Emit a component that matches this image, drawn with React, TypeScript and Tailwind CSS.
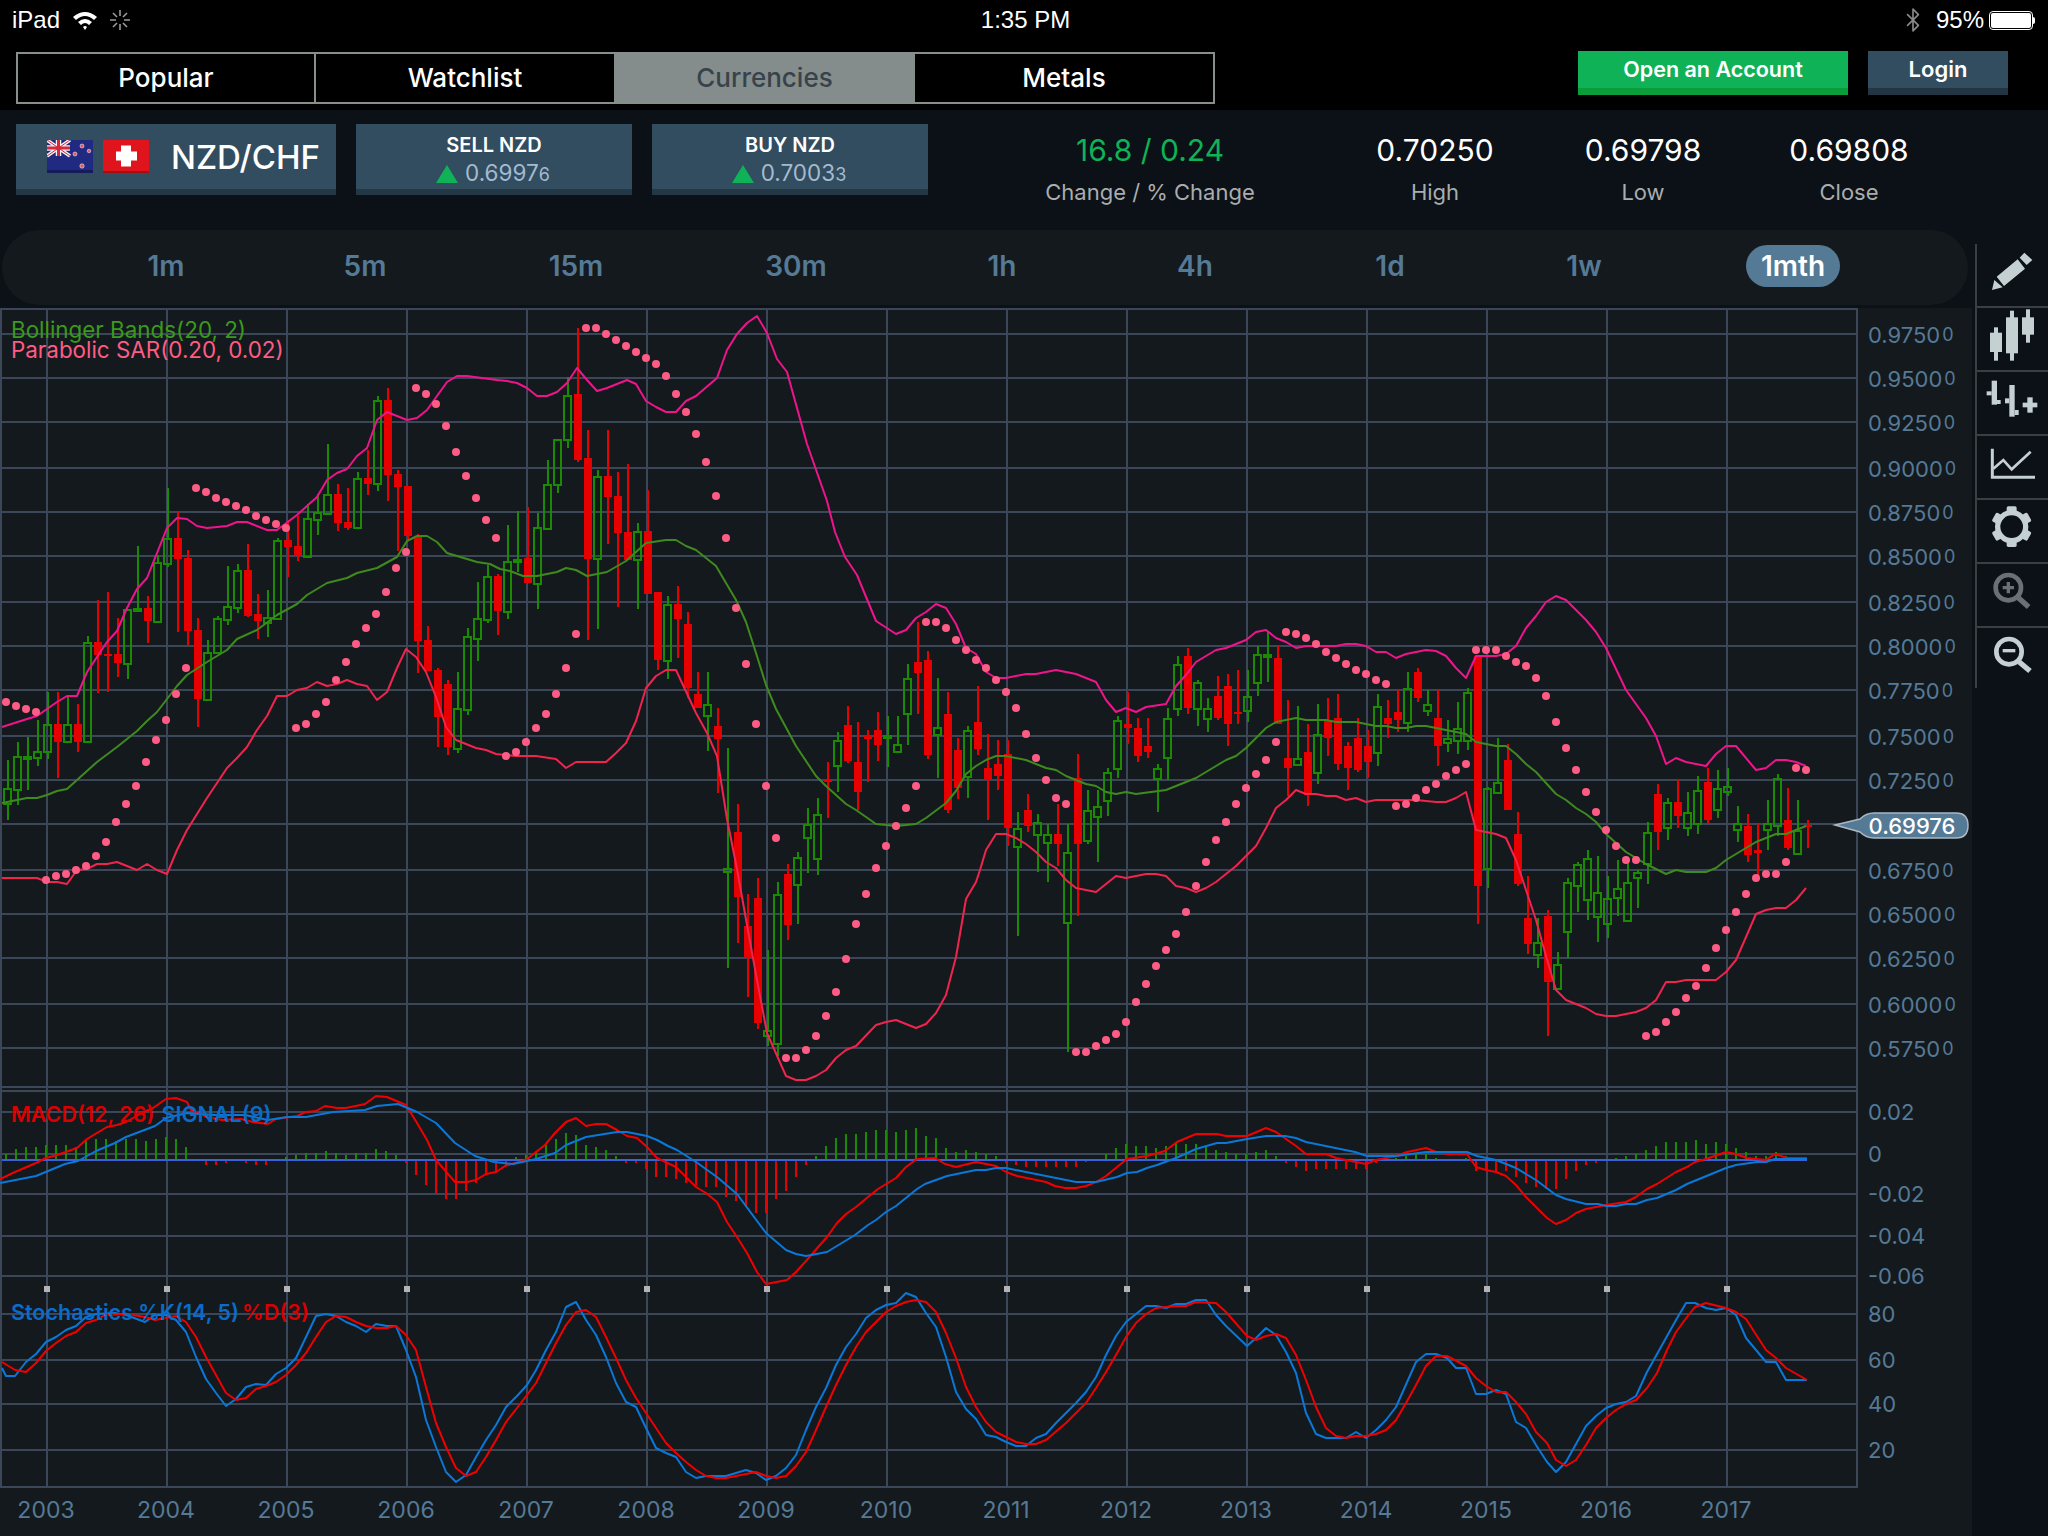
import { Bluetooth } from 'lucide-react';

// [green?, high, bodyTop, bodyBottom, low] in chart pixels, one per month from x=7
const candles: number[][] = [
  [1,760,789,804,820],[1,742,757,790,805],[1,737,757,759,790],[1,720,752,758,766],[1,692,725,752,759],[0,692,724,742,778],[1,695,725,742,743],[0,704,724,742,752],[1,636,643,742,742],[0,600,642,655,693],
  [0,592,654,656,692],[0,618,654,663,677],[1,609,610,664,679],[1,546,609,611,611],[0,596,608,621,643],[1,555,563,622,622],[1,488,539,564,567],[0,512,538,559,632],[0,550,558,631,645],[0,618,630,699,727],
  [1,640,653,700,700],[1,616,619,653,653],[1,566,607,620,625],[1,564,571,608,613],[0,544,570,616,617],[0,594,614,621,639],[1,590,618,623,637],[1,538,541,619,619],[0,520,540,547,577],[0,516,546,555,561],
  [1,504,519,557,557],[1,494,513,520,535],[1,444,495,514,514],[0,484,494,523,531],[0,488,522,528,530],[1,472,479,528,528],[0,450,478,484,495],[1,396,401,484,491],[0,388,400,475,501],[0,470,474,487,551],
  [0,486,486,536,539],[0,534,536,641,673],[0,626,640,671,671],[0,668,670,717,747],[0,680,684,747,755],[1,672,709,749,753],[1,628,637,710,715],[1,582,619,639,661],[1,565,577,620,623],[0,574,576,611,635],
  [1,525,562,612,619],[1,511,560,562,572],[0,507,558,583,583],[1,513,528,584,609],[1,460,485,529,530],[1,440,440,485,493],[1,377,396,440,448],[0,328,394,460,462],[0,430,458,559,640],[1,470,477,559,629],
  [0,430,476,497,544],[0,472,496,533,607],[0,464,532,560,560],[1,523,532,560,609],[0,490,531,594,594],[0,592,592,660,670],[1,596,605,661,679],[0,586,604,619,658],[0,612,624,688,698],[0,672,694,708,708],
  [1,672,705,716,751],[0,708,726,739,793],[1,748,869,872,968],[0,804,832,897,943],[0,894,926,957,997],[0,878,898,1023,1029],[1,950,1031,1036,1046],[1,882,895,1044,1056],[0,864,874,925,940],[1,852,858,885,924],
  [1,808,825,838,873],[1,798,815,859,875],[0,762,779,782,818],[1,732,741,766,792],[0,706,725,761,763],[0,722,762,792,810],[0,730,736,739,782],[0,712,730,745,761],[1,716,736,738,767],[1,716,745,752,752],
  [1,664,679,714,745],[0,622,662,673,714],[0,651,660,755,759],[1,678,728,735,778],[0,692,714,810,813],[0,738,750,788,799],[1,726,731,777,798],[0,686,722,749,755],[0,734,768,780,820],[0,740,764,776,790],
  [0,740,754,828,846],[1,812,829,847,936],[0,794,810,826,832],[1,814,823,835,872],[1,824,835,843,882],[0,804,834,844,866],[1,824,853,923,1052],[0,754,778,844,916],[1,790,811,841,844],[1,790,807,817,862],
  [1,768,773,801,816],[1,716,721,769,778],[0,692,724,728,744],[0,718,728,756,762],[0,718,746,752,758],[1,764,769,779,812],[1,708,719,758,780],[1,656,665,709,716],[0,648,656,708,714],[1,680,683,709,726],
  [1,698,709,719,732],[0,676,696,718,720],[0,674,686,724,746],[0,670,712,714,724],[1,670,697,711,722],[1,646,655,683,696],[1,632,655,657,682],[0,646,658,724,724],[0,700,758,768,796],[1,706,759,765,765],
  [0,724,752,795,806],[1,704,735,773,784],[0,698,720,738,756],[0,694,718,764,770],[0,742,746,768,790],[0,718,738,770,772],[0,730,746,762,778],[1,694,707,753,766],[0,700,718,724,738],[0,690,712,720,732],
  [1,672,689,723,732],[0,668,672,698,702],[1,690,705,711,716],[0,690,718,746,766],[1,720,739,743,752],[1,702,729,741,754],[1,688,693,741,750],[0,656,656,886,924],[1,787,789,869,888],[1,738,783,793,793],
  [0,744,760,810,810],[0,812,834,884,886],[0,876,918,944,954],[1,918,943,955,968],[0,910,916,982,1036],[1,952,965,989,989],[1,878,883,932,958],[1,862,865,886,912],[1,850,859,900,920],[1,856,893,917,942],
  [1,876,899,924,938],[1,860,889,898,916],[1,862,883,921,922],[1,870,873,878,908],[1,822,833,864,884],[0,784,794,832,850],[1,798,803,828,840],[0,780,802,816,828],[1,792,813,828,836],[1,776,791,824,834],
  [0,768,782,820,824],[1,770,789,810,818],[1,768,787,792,796],[1,806,824,830,842],[0,814,826,855,862],[0,824,850,853,878],[1,800,824,830,850],[1,774,779,826,836],[0,788,820,848,850],[1,800,831,854,854],
  [0,820,825,827,848],
];

const upperBand = '2,727 27,719 37,716 57,702 67,696 77,696 87,672 107,642 117,631 127,608 137,589 147,578 167,528 177,518 187,519 197,526 207,528 227,526 237,522 247,522 267,530 277,530 297,515 317,497 327,480 337,473 347,469 357,456 367,448 377,420 387,412 407,420 417,418 427,410 447,382 457,376 467,376 497,380 507,381 517,383 527,388 537,396 547,396 557,392 567,383 577,368 587,380 597,391 607,388 627,380 636,384 646,401 656,407 666,412 676,412 686,401 696,396 717,378 727,350 737,334 747,323 757,316 767,333 777,359 787,372 807,444 827,501 835,532 845,557 857,575 876,621 896,634 906,630 916,618 926,612 936,604 946,608 956,624 966,648 976,654 986,672 996,678 1006,678 1026,674 1036,674 1056,670 1076,674 1096,682 1106,700 1116,712 1126,708 1136,712 1146,707 1166,704 1176,686 1186,675 1196,662 1216,650 1226,648 1246,640 1256,632 1266,630 1276,638 1286,642 1296,648 1306,646 1336,646 1346,644 1356,644 1366,646 1376,652 1386,652 1396,658 1406,654 1426,650 1436,651 1446,656 1456,668 1466,678 1476,656 1496,656 1506,654 1516,646 1526,628 1536,616 1546,602 1556,596 1566,600 1586,620 1596,632 1606,648 1626,690 1636,704 1646,718 1656,736 1666,764 1676,758 1686,762 1706,766 1716,754 1726,746 1736,746 1756,770 1766,768 1776,760 1786,760 1796,762 1806,766';
const midBand = '2,803 27,798 37,798 47,795 57,791 67,789 77,780 97,762 117,747 137,731 147,721 157,712 177,686 187,675 207,662 227,650 237,639 257,630 277,615 297,604 307,595 327,583 347,578 357,573 377,568 397,557 407,541 417,536 427,536 437,542 447,553 457,556 477,562 490,564 500,569 510,571 523,576 537,576 557,572 566,568 576,570 587,576 607,572 626,561 646,543 666,540 676,540 686,546 696,550 716,566 736,600 746,622 756,653 766,685 776,709 796,746 816,776 826,786 846,804 856,810 876,824 896,826 916,824 926,818 946,803 956,791 966,774 976,766 986,760 996,756 1006,756 1026,760 1046,768 1056,770 1066,776 1086,784 1096,786 1106,792 1116,794 1126,792 1136,794 1166,790 1196,778 1216,766 1226,760 1236,756 1246,748 1266,728 1276,722 1296,718 1306,720 1326,720 1336,722 1356,722 1376,726 1386,726 1396,728 1406,728 1416,726 1426,726 1446,730 1466,734 1476,742 1496,746 1506,746 1516,754 1526,764 1536,772 1556,794 1566,800 1576,808 1586,814 1596,822 1606,834 1626,852 1646,864 1666,874 1676,870 1686,872 1706,872 1716,868 1726,860 1756,842 1776,834 1786,834 1806,826';
const lowerBand = '2,878 37,878 47,882 57,882 67,884 77,870 87,869 97,864 107,864 117,862 137,870 147,864 157,870 167,874 177,850 187,830 207,798 227,768 237,758 247,747 257,730 267,716 277,696 287,696 297,690 307,688 317,682 327,686 337,684 347,680 357,684 367,686 377,700 387,692 397,668 406,649 416,657 426,672 436,697 446,727 456,740 476,748 486,750 496,754 516,756 536,756 556,759 566,768 576,762 606,762 616,753 626,743 636,721 646,688 656,676 666,670 676,670 696,713 707,733 717,756 727,819 737,869 747,925 757,980 767,1033 786,1076 796,1080 806,1080 816,1076 826,1070 836,1058 846,1050 856,1046 876,1025 886,1022 896,1020 916,1028 926,1024 936,1013 946,995 956,957 966,899 976,882 980,870 986,850 996,834 1006,834 1016,838 1026,844 1036,852 1046,862 1056,868 1066,880 1076,888 1096,892 1116,876 1126,878 1146,874 1156,874 1166,876 1176,886 1186,888 1196,892 1206,888 1216,882 1236,866 1256,846 1266,828 1276,808 1286,800 1296,790 1306,794 1316,794 1326,796 1336,796 1346,800 1356,798 1366,802 1376,800 1416,800 1436,802 1446,802 1456,798 1466,792 1476,830 1496,834 1506,838 1516,860 1526,890 1536,920 1546,956 1556,990 1566,1000 1586,1008 1596,1014 1606,1016 1616,1016 1636,1012 1646,1008 1656,1000 1666,982 1676,982 1686,980 1716,980 1726,972 1736,960 1756,914 1766,910 1776,908 1786,908 1796,900 1806,888';

const sar = [
  [6,702],[16,706],[26,709],[36,712],[46,880],[56,876],[66,874],[76,870],[86,866],[96,856],[106,842],[116,822],[126,804],[136,786],[146,762],[156,740],[166,720],[176,694],[186,668],
  [196,488],[206,492],[216,498],[226,502],[236,506],[246,510],[256,516],[266,520],[276,524],[286,528],[296,728],[306,724],[316,714],[326,702],[336,680],[346,662],[356,644],[366,628],[376,614],[386,592],[396,568],[406,552],
  [416,388],[426,394],[436,404],[446,426],[456,452],[466,476],[476,498],[486,520],[496,538],[506,756],[516,752],[526,742],[536,728],[546,714],[556,694],[566,668],[576,634],
  [586,328],[596,328],[606,334],[616,340],[626,346],[636,352],[646,358],[656,364],[666,376],[676,394],[686,412],[696,434],[706,462],[716,496],[726,538],[736,608],[746,664],[756,724],[766,786],[776,838],
  [786,1058],[796,1058],[806,1050],[816,1036],[826,1016],[836,992],[846,959],[856,924],[866,894],[876,868],[886,846],[896,826],[906,808],[916,786],
  [926,622],[936,622],[946,628],[956,640],[966,650],[976,660],[986,668],[996,680],[1006,692],[1016,708],[1026,734],[1036,758],[1046,780],[1056,798],[1066,804],
  [1076,1052],[1086,1052],[1096,1046],[1106,1040],[1116,1034],[1126,1022],[1136,1002],[1146,984],[1156,966],[1166,950],[1176,934],[1186,912],[1196,886],[1206,862],[1216,840],[1226,822],[1236,804],[1246,788],[1256,774],[1266,760],[1276,742],
  [1286,632],[1296,634],[1306,638],[1316,644],[1326,652],[1336,658],[1346,664],[1356,670],[1366,674],[1376,680],[1386,684],[1396,806],[1406,804],[1416,798],[1426,790],[1436,784],[1446,776],[1456,770],[1466,764],
  [1476,650],[1486,650],[1496,650],[1506,656],[1516,662],[1526,666],[1536,678],[1546,696],[1556,722],[1566,748],[1576,770],[1586,792],[1596,812],[1606,830],[1616,846],[1626,860],[1636,860],
  [1646,1036],[1656,1032],[1666,1022],[1676,1012],[1686,998],[1696,986],[1706,968],[1716,948],[1726,930],[1736,912],[1746,894],[1756,878],[1766,874],[1776,874],[1786,862],[1796,768],[1806,770],
];

// signed bar height above the MACD zero line, one per month from x=6
const histogram = [6,11,13,13,15,15,15,13,19,21,21,19,21,21,19,21,23,21,13,0,-5,-5,-3,0,-3,-5,-5,0,3,5,7,7,9,7,5,7,7,11,9,5,-3,-15,-25,-33,-39,-39,-31,-23,-15,-11,-5,3,5,9,15,21,27,25,15,13,10,4,-3,-3,-9,-17,-17,-19,-23,-25,-27,-27,-37,-41,-47,-53,-53,-39,-31,-17,-5,4,14,22,26,26,28,30,30,28,30,32,24,22,12,8,10,8,6,4,-3,-5,-7,-7,-7,-7,-7,-7,-2,0,6,12,16,14,14,12,14,18,16,16,14,10,8,6,6,8,10,4,-3,-7,-11,-9,-9,-9,-9,-9,-9,-3,0,2,4,6,6,2,0,0,2,-11,-11,-11,-11,-17,-23,-27,-29,-29,-19,-11,-5,-3,0,2,4,6,10,14,18,18,18,20,16,18,16,12,8,4,4,8,4,2,2];

const macdLine = '0,1179 15,1172 36,1163 46,1158 57,1155 77,1148 87,1139 107,1127 117,1125 126,1122 142,1113 153,1108 166,1099 176,1098 187,1102 191,1110 207,1117 222,1120 241,1119 253,1122 268,1124 276,1119 297,1116 306,1112 316,1111 325,1106 337,1108 346,1108 365,1104 376,1096 387,1097 406,1105 417,1123 427,1140 436,1160 455,1182 467,1182 476,1180 486,1174 496,1172 505,1166 515,1163 526,1160 536,1152 545,1145 555,1133 566,1122 576,1118 586,1126 596,1124 606,1124 617,1130 627,1136 637,1138 647,1147 657,1158 676,1167 696,1187 706,1193 717,1202 727,1222 737,1237 747,1253 757,1272 766,1284 787,1280 796,1272 806,1261 827,1237 837,1223 846,1214 856,1207 868,1197 878,1189 896,1178 906,1167 917,1159 935,1158 945,1164 956,1167 976,1162 996,1166 1006,1172 1017,1176 1046,1182 1055,1186 1065,1188 1076,1188 1086,1186 1096,1182 1106,1176 1117,1167 1127,1159 1147,1156 1165,1151 1177,1142 1196,1134 1217,1134 1226,1136 1247,1136 1266,1128 1276,1132 1296,1146 1306,1154 1326,1154 1336,1158 1366,1164 1376,1160 1396,1156 1407,1152 1426,1148 1436,1152 1447,1154 1467,1154 1476,1167 1486,1170 1496,1172 1506,1176 1516,1185 1526,1197 1547,1218 1556,1224 1566,1220 1576,1213 1586,1209 1606,1205 1626,1202 1636,1197 1647,1189 1657,1184 1676,1172 1687,1167 1695,1162 1706,1159 1726,1152 1736,1154 1747,1158 1766,1160 1775,1154 1787,1158 1807,1158';
const signalLine = '0,1183 36,1176 65,1164 78,1161 96,1151 115,1143 126,1137 155,1126 166,1118 187,1113 214,1115 245,1115 268,1120 287,1117 306,1117 333,1112 365,1110 377,1106 398,1104 417,1112 436,1123 455,1143 475,1156 494,1162 513,1164 536,1159 555,1153 566,1145 586,1137 617,1132 627,1132 647,1136 657,1140 668,1146 677,1150 696,1162 717,1177 737,1194 766,1233 786,1250 796,1254 806,1256 827,1252 855,1235 868,1225 876,1220 886,1212 896,1206 917,1189 925,1184 947,1176 976,1170 986,1170 996,1168 1006,1168 1076,1182 1096,1182 1117,1177 1127,1173 1137,1172 1147,1168 1157,1165 1176,1158 1196,1149 1217,1143 1226,1143 1247,1139 1266,1136 1285,1136 1296,1138 1306,1142 1355,1152 1367,1156 1396,1156 1426,1152 1467,1152 1477,1156 1496,1160 1516,1168 1536,1180 1556,1195 1566,1199 1586,1204 1598,1204 1606,1206 1616,1206 1626,1204 1636,1204 1647,1200 1657,1198 1676,1190 1687,1184 1726,1168 1736,1165 1757,1162 1766,1162 1775,1159 1807,1159';
const stochK = '2,1368 6,1376 15,1376 26,1362 36,1354 46,1342 56,1337 66,1330 76,1326 86,1317 96,1314 115,1313 126,1315 145,1322 155,1315 166,1315 176,1320 186,1332 196,1357 206,1379 216,1393 226,1406 236,1399 246,1387 256,1384 266,1385 276,1374 286,1368 296,1358 306,1337 316,1316 326,1314 336,1316 346,1322 356,1326 366,1332 376,1324 387,1326 396,1326 406,1350 416,1377 426,1420 436,1447 446,1472 456,1482 466,1475 476,1457 486,1440 496,1425 506,1407 517,1396 527,1385 536,1370 546,1350 556,1332 566,1307 576,1302 586,1320 596,1335 606,1357 616,1383 626,1402 636,1407 646,1428 656,1448 666,1453 676,1457 686,1472 696,1478 706,1476 726,1476 746,1470 756,1473 766,1480 776,1476 786,1468 796,1455 806,1430 816,1407 826,1388 836,1365 846,1347 856,1334 866,1318 876,1310 886,1305 896,1303 906,1293 916,1297 926,1313 936,1327 946,1357 956,1392 966,1409 976,1419 986,1435 996,1437 1006,1442 1016,1446 1026,1446 1036,1438 1046,1434 1056,1423 1076,1403 1086,1392 1096,1377 1106,1355 1116,1336 1126,1322 1146,1306 1156,1306 1166,1308 1176,1304 1186,1304 1196,1300 1206,1300 1216,1315 1226,1326 1247,1346 1256,1338 1266,1328 1276,1335 1286,1352 1296,1373 1306,1413 1316,1434 1326,1438 1346,1438 1356,1432 1366,1438 1376,1430 1386,1420 1396,1407 1416,1362 1426,1354 1436,1354 1447,1358 1456,1368 1466,1368 1476,1394 1486,1394 1496,1390 1506,1394 1516,1422 1526,1428 1536,1445 1547,1462 1556,1472 1566,1462 1586,1426 1596,1416 1606,1408 1616,1404 1626,1402 1636,1396 1647,1372 1676,1320 1686,1303 1695,1303 1706,1308 1716,1310 1726,1308 1736,1315 1746,1338 1766,1362 1776,1362 1786,1380 1807,1380';
const stochD = '2,1362 15,1370 26,1372 36,1363 46,1351 56,1343 66,1336 76,1332 86,1323 96,1320 105,1315 126,1314 145,1317 155,1320 176,1316 186,1322 196,1337 206,1357 216,1375 226,1393 236,1400 246,1398 256,1389 266,1386 276,1382 286,1375 296,1365 306,1353 316,1337 326,1322 336,1316 346,1317 356,1322 366,1326 376,1328 387,1328 396,1326 406,1335 416,1350 426,1387 436,1423 446,1447 456,1468 466,1476 476,1472 486,1457 496,1440 506,1422 517,1408 527,1395 536,1383 546,1363 556,1343 566,1325 576,1312 586,1310 596,1317 606,1337 616,1358 626,1380 636,1398 646,1413 656,1428 666,1443 676,1453 686,1462 696,1470 706,1476 716,1478 726,1478 746,1474 756,1472 766,1476 776,1478 786,1476 796,1466 806,1452 816,1430 826,1407 836,1385 846,1365 856,1347 866,1332 876,1322 886,1312 896,1306 906,1302 916,1300 926,1302 936,1312 946,1333 956,1358 966,1387 976,1407 986,1422 996,1432 1006,1437 1016,1442 1026,1444 1036,1444 1046,1440 1066,1423 1086,1403 1096,1388 1106,1372 1116,1355 1126,1337 1136,1323 1146,1314 1156,1308 1176,1306 1186,1306 1196,1302 1216,1303 1226,1312 1247,1336 1256,1340 1266,1336 1276,1334 1286,1338 1296,1355 1306,1380 1316,1407 1326,1428 1336,1436 1346,1438 1356,1436 1366,1436 1376,1434 1386,1430 1396,1420 1406,1403 1416,1385 1426,1366 1436,1356 1447,1356 1466,1366 1476,1378 1486,1386 1496,1392 1506,1392 1516,1402 1526,1414 1536,1432 1547,1443 1556,1460 1566,1466 1576,1460 1586,1445 1596,1428 1606,1418 1616,1410 1626,1404 1636,1400 1647,1388 1657,1373 1667,1350 1676,1332 1687,1317 1695,1307 1706,1303 1726,1308 1736,1312 1746,1319 1766,1350 1776,1358 1786,1368 1807,1380';

const gridX = Array.from({ length: 15 }, (_, i) => 47 + i * 120);
const gridY = [334,378,422,468,512,556,602,646,690,736,780,824,870,914,958,1004,1048,1087,1091,1112,1154,1194,1236,1276,1314,1360,1404,1450];
const priceLabels = [[334,'0.9750'],[378,'0.9500'],[422,'0.9250'],[468,'0.9000'],[512,'0.8750'],[556,'0.8500'],[602,'0.8250'],[646,'0.8000'],[690,'0.7750'],[736,'0.7500'],[780,'0.7250'],[870,'0.6750'],[914,'0.6500'],[958,'0.6250'],[1004,'0.6000'],[1048,'0.5750']] as [number, string][];
const sideLabels = [[1112,'0.02'],[1154,'0'],[1194,'-0.02'],[1236,'-0.04'],[1276,'-0.06'],[1314,'80'],[1360,'60'],[1404,'40'],[1450,'20']] as [number, string][];

const tabs = [
  { label: 'Popular', width: 'w-[298px] border-r-2 border-[#868e8e] text-white' },
  { label: 'Watchlist', width: 'w-[298px] text-white' },
  { label: 'Currencies', width: 'w-[301px] bg-[#848c8c] text-[#36434a]' },
  { label: 'Metals', width: 'w-[298px] text-white' },
];
const timeframes = [
  { label: '1m', width: 'w-[198px]' },
  { label: '5m', width: 'w-[200px]' },
  { label: '15m', width: 'w-[222px]' },
  { label: '30m', width: 'w-[218px]' },
  { label: '1h', width: 'ml-[4px] w-[186px]' },
  { label: '4h', width: 'w-[200px]' },
  { label: '1d', width: 'w-[190px]' },
  { label: '1w', width: 'w-[198px]' },
];

function Candle({ c, i }: { c: number[]; i: number }) {
  const [green, hi, top, bot, lo] = c;
  const x = 7 + i * 10;
  if (green) {
    return (
      <g>
        <line x1={x + 1} x2={x + 1} y1={hi} y2={top} stroke="#1a8a00" strokeWidth="2" />
        <line x1={x + 1} x2={x + 1} y1={bot} y2={lo} stroke="#1a8a00" strokeWidth="2" />
        <rect x={x - 3} y={top} width="7" height={bot - top} fill="none" stroke="#1a8a00" strokeWidth="2" />
      </g>
    );
  }
  return (
    <g>
      <line x1={x + 1} x2={x + 1} y1={hi} y2={lo} stroke="#e60000" strokeWidth="2" />
      <rect x={x - 3} y={top} width="8" height={bot - top} fill="#e60000" />
    </g>
  );
}

function Chart() {
  return (
    <svg width="1972" height="1228" viewBox="0 308 1972 1228" className="block bg-[#14191e]" fontFamily="Inter, sans-serif">
      <g stroke="#3b4759" strokeWidth="2">
        <line x1="0" x2="1858" y1="309" y2="309" />
        <line x1="1" x2="1" y1="309" y2="1487" />
        <line x1="1857" x2="1857" y1="309" y2="1487" />
        <line x1="0" x2="1858" y1="1487" y2="1487" />
        {gridY.map(y => <line key={y} x1="0" x2="1857" y1={y} y2={y} />)}
        {gridX.map(x => <line key={x} x1={x} x2={x} y1="309" y2="1487" />)}
      </g>

      {candles.map((c, i) => <Candle key={i} c={c} i={i} />)}
      <g fill="none" strokeWidth="2" strokeLinejoin="round">
        <polyline points={upperBand} stroke="#f0148c" />
        <polyline points={midBand} stroke="#3f8a1e" />
        <polyline points={lowerBand} stroke="#f0244c" />
      </g>
      {sar.map(([x, y]) => <circle key={x} cx={x} cy={y} r="4" fill="#ff5c85" />)}

      {histogram.map((h, i) => h !== 0 && (
        <rect key={i} x={5 + i * 10} y={h > 0 ? 1160 - h : 1160} width="2" height={Math.abs(h)} fill={h > 0 ? '#1a8a00' : '#e60000'} />
      ))}
      <line x1="2" x2="1807" y1="1160" y2="1160" stroke="#3a62d8" strokeWidth="2" />
      <g fill="none" strokeWidth="2" strokeLinejoin="round">
        <polyline points={macdLine} stroke="#f00000" />
        <polyline points={signalLine} stroke="#0a78d8" />
        <polyline points={stochK} stroke="#0a78d8" />
        <polyline points={stochD} stroke="#f00000" />
      </g>
      {gridX.map(x => <rect key={x} x={x - 3} y="1286" width="6" height="6" fill="#b4b4b4" />)}

      <text x="11" y="338" fontSize="22.4" fill="#3a9a1a">Bollinger Bands(20, 2)</text>
      <text x="11" y="358" fontSize="22.4" fill="#ff5c85">Parabolic SAR(0.20, 0.02)</text>
      <text x="11" y="1122" fontSize="21.5" fontWeight="600">
        <tspan fill="#d80000">MACD(12, 26)</tspan>
        <tspan fill="#0a6cc8" dx="7">SIGNAL(9)</tspan>
      </text>
      <text x="11" y="1320" fontSize="21.5" fontWeight="600">
        <tspan fill="#0a6cc8">Stochastics %K(14, 5)</tspan>
        <tspan fill="#d80000" dx="3">%D(3)</tspan>
      </text>

      <g fill="#557a96" fontSize="22">
        {priceLabels.map(([y, t]) => (
          <text key={y} x="1868" y={y + 9}>{t}<tspan fontSize="18" dx="2" dy="-2">0</tspan></text>
        ))}
        {sideLabels.map(([y, t]) => <text key={y} x="1868" y={y + 8}>{t}</text>)}
        {gridX.map((x, i) => <text key={x} x={x - 1} y="1518" textAnchor="middle" fontSize="23">{2003 + i}</text>)}
      </g>

      <path d="M1835 825 L1860 819 Q1866 813 1874 813 L1956 813 Q1968 813 1968 825.5 Q1968 838 1956 838 L1874 838 Q1866 838 1860 832 Z" fill="#557a96" stroke="#aab8c2" strokeWidth="1.5" />
      <text x="1912" y="834" textAnchor="middle" fontSize="22" fontWeight="500" fill="#ffffff">0.69976</text>
    </svg>
  );
}

function SideIcon({ y, children }: { y: number; children: React.ReactNode }) {
  return (
    <div className="flex h-[64px] items-center border-b-2 border-[#3a3f42] last:h-[60px] last:border-b-0">
      <svg width="71" height="62" viewBox={`411 ${y} 213 186`}>{children}</svg>
    </div>
  );
}

function Sidebar() {
  const ic = '#c5d0d3';
  return (
    <div className="w-[73px] pt-[14px]">
      <div className="border-l-2 border-[#3a3f42]">
        <SideIcon y={42}>
          <path d="M470 140 L533 88 L555 116 L492 168 Z M456 180 L463 150 L488 172 Z M539 83 L553 68 L577 90 L560 105 Z" fill={ic} />
        </SideIcon>
        <SideIcon y={234}>
          <g fill={ic}>
            <rect x="450" y="308" width="36" height="58" /><rect x="462" y="292" width="12" height="100" />
            <rect x="498" y="262" width="36" height="108" /><rect x="510" y="242" width="12" height="150" />
            <rect x="546" y="262" width="36" height="52" /><rect x="558" y="238" width="12" height="100" />
          </g>
        </SideIcon>
        <SideIcon y={426}>
          <g fill={ic}>
            <rect x="455" y="452" width="16" height="72" /><rect x="440" y="484" width="15" height="12" /><rect x="471" y="510" width="11" height="12" />
            <rect x="508" y="465" width="16" height="95" /><rect x="495" y="505" width="13" height="15" /><rect x="524" y="540" width="12" height="15" />
            <rect x="562" y="502" width="16" height="46" /><rect x="548" y="518" width="44" height="14" />
          </g>
        </SideIcon>
        <SideIcon y={618}>
          <path d="M457 656 V742 H585" fill="none" stroke={ic} strokeWidth="9" />
          <polyline points="460,716 490,690 515,718 572,665" fill="none" stroke={ic} strokeWidth="8" />
        </SideIcon>
        <SideIcon y={810}>
          <circle cx="515" cy="890" r="42" fill="none" stroke={ic} strokeWidth="16" />
          {[0, 60, 120, 180, 240, 300].map(a => (
            <rect key={a} x="500" y="829" width="30" height="20" rx="5" fill={ic} transform={`rotate(${a} 515 890)`} />
          ))}
        </SideIcon>
        <SideIcon y={1002}>
          <circle cx="505" cy="1073" r="38" fill="none" stroke="#6a7073" strokeWidth="14" />
          <path d="M535 1103 L566 1131" stroke="#6a7073" strokeWidth="16" />
          <path d="M505 1056 V1090 M488 1073 H522" stroke="#6a7073" strokeWidth="10" />
        </SideIcon>
        <SideIcon y={1194}>
          <circle cx="507" cy="1268" r="38" fill="none" stroke={ic} strokeWidth="14" />
          <path d="M537 1298 L570 1326" stroke={ic} strokeWidth="16" />
          <path d="M488 1265 H526" stroke={ic} strokeWidth="10" />
        </SideIcon>
      </div>
    </div>
  );
}

function NzFlag() {
  return (
    <svg width="46" height="33" viewBox="0 0 46 33" className="block">
      <rect width="46" height="33" rx="1" fill="#1f2a80" />
      <rect y="30" width="46" height="3" fill="#141c5c" />
      <path d="M0 0 L23 16 M23 0 L0 16" stroke="#f2f2f2" strokeWidth="3.5" />
      <path d="M11.5 0 V16 M0 8 H23" stroke="#f2f2f2" strokeWidth="5.5" />
      <path d="M11.5 0 V16 M0 8 H23" stroke="#d8263c" strokeWidth="3" />
      <path d="M0 0 L23 16 M23 0 L0 16" stroke="#d8263c" strokeWidth="1" />
      <g fill="#e05a6a" stroke="#ffffff" strokeWidth="0.5">
        <circle cx="35" cy="6" r="2" /><circle cx="28" cy="14" r="2" /><circle cx="42" cy="11" r="1.8" /><circle cx="35" cy="26" r="2.2" />
      </g>
    </svg>
  );
}

function ChFlag() {
  return (
    <svg width="46" height="33" viewBox="0 0 46 33" className="block">
      <rect width="46" height="33" rx="1" fill="#e0141c" />
      <rect y="31" width="46" height="2" fill="#a50f14" />
      <path d="M18 6 H28 V12 H34 V21 H28 V27 H18 V21 H13 V12 H18 Z" fill="#ffffff" transform="translate(0 -0.5)" />
    </svg>
  );
}

function QuoteButton({ title, price, last }: { title: string; price: string; last: string }) {
  return (
    <div className="flex h-[71px] w-[276px] flex-col items-center border-b-[6px] border-[#243744] bg-[#324c60] pt-[8px]">
      <div className="text-[20px] leading-[26px] font-semibold text-white">{title}</div>
      <div className="mt-[1px] flex items-center gap-[7px] text-[22.5px] leading-[28px] text-[#a3bbce]">
        <svg width="22" height="18" viewBox="0 0 22 18" className="-ml-[2px] block"><path d="M11 0 L22 18 H0 Z" fill="#10b257" /></svg>
        <span>{price}<span className="text-[18px]">{last}</span></span>
      </div>
    </div>
  );
}

function Stat({ value, label, box, green }: { value: string; label: string; box: string; green?: boolean }) {
  return (
    <div className={`text-center ${box}`}>
      <div className={`text-[30px] leading-[40px] ${green ? 'text-[#10b257]' : 'text-white'}`}>{value}</div>
      <div className="mt-[8px] whitespace-nowrap text-[22px] leading-[28px] text-[#a9adaf]">{label}</div>
    </div>
  );
}

function StatusBar() {
  return (
    <div className="grid h-[40px] grid-cols-3 items-center px-[12px] text-[24px] text-white" style={{ fontFamily: '"Liberation Sans", sans-serif' }}>
      <div className="flex items-center">
        <span>iPad</span>
        <svg width="26" height="20" viewBox="0 0 26 20" className="ml-[12px]">
          <path d="M1 7 Q13 -3 25 7 L22 10 Q13 2 4 10 Z M6 12 Q13 6 20 12 L17 15 Q13 11 9 15 Z M11 17 Q13 15 15 17 L13 20 Z" fill="#ffffff" />
        </svg>
        <svg width="22" height="22" viewBox="0 0 22 22" className="ml-[11px]" stroke="#9a9a9a" strokeWidth="1.6">
          <path d="M11 1 V7 M11 15 V21 M1 11 H7 M15 11 H21 M4 4 L8 8 M14 14 L18 18 M18 4 L14 8 M8 14 L4 18" />
        </svg>
      </div>
      <div className="pl-[3px] text-center">1:35 PM</div>
      <div className="flex items-center justify-end pr-[1px]">
        <Bluetooth size={26} strokeWidth={1.5} className="text-[#8a8a8a]" />
        <span className="ml-[10px]">95%</span>
        <div className="ml-[5px] flex items-center">
          <div className="h-[19px] w-[44px] rounded-[4px] border border-white p-[1px]"><div className="h-full w-full rounded-[2px] bg-white" /></div>
          <div className="h-[7px] w-[2px] rounded-r-[2px] bg-white" />
        </div>
      </div>
    </div>
  );
}

export default function App() {
  return (
    <div className="h-[1536px] w-[2048px] overflow-hidden bg-[#0b1116]" style={{ fontFamily: 'Inter, sans-serif' }}>
      <div className="h-[110px] bg-black">
        <StatusBar />
        <div className="flex items-start pl-[16px] pt-[11px]">
          <div className="mt-[1px] flex h-[52px] w-[1199px] border-2 border-[#868e8e]">
            {tabs.map(t => (
              <div key={t.label} className={`flex items-center justify-center pb-[2px] text-[26px] font-medium ${t.width}`}>
                {t.label}
              </div>
            ))}
          </div>
          <div className="ml-[363px] h-[44px] w-[270px] border-b-[7px] border-[#0a9e3a] bg-[#10b257] text-center text-[21.5px] leading-[36px] font-semibold text-white">Open an Account</div>
          <div className="ml-[20px] h-[44px] w-[140px] border-b-[7px] border-[#233442] bg-[#324c60] text-center text-[22px] leading-[36px] font-semibold text-white">Login</div>
        </div>
      </div>

      <div className="flex h-[120px] items-start pl-[16px]">
        <div className="mt-[14px] flex h-[71px] w-[320px] items-center border-b-[6px] border-[#243744] bg-[#324c60] pl-[31px]">
          <NzFlag />
          <div className="ml-[10px]"><ChFlag /></div>
          <span className="ml-[22px] pt-[2px] text-[33px] font-medium text-white">NZD/CHF</span>
        </div>
        <div className="mt-[14px] ml-[20px]"><QuoteButton title="SELL NZD" price="0.6997" last="6" /></div>
        <div className="mt-[14px] ml-[20px]"><QuoteButton title="BUY NZD" price="0.7003" last="3" /></div>
        <div className="flex pt-[20px]">
          <Stat value="16.8 / 0.24" label="Change / % Change" box="ml-[102px] w-[240px]" green />
          <Stat value="0.70250" label="High" box="ml-[65px] w-[200px]" />
          <Stat value="0.69798" label="Low" box="ml-[8px] w-[200px]" />
          <Stat value="0.69808" label="Close" box="ml-[6px] w-[200px]" />
        </div>
      </div>

      <div className="flex">
        <div className="w-[1975px]">
          <div className="ml-[2px] flex h-[75px] w-[1966px] items-center rounded-full bg-[#14191e] pl-[65px] pb-[3px] text-[28px] font-semibold text-[#557a96]">
            {timeframes.map(t => (
              <div key={t.label} className={`${t.width} text-center`}>{t.label}</div>
            ))}
            <div className="ml-[63px] h-[42px] w-[94px] rounded-[21px] bg-[#557a96] text-center leading-[42px] text-white">1mth</div>
          </div>
          <div className="pt-[3px]"><Chart /></div>
        </div>
        <Sidebar />
      </div>
    </div>
  );
}
